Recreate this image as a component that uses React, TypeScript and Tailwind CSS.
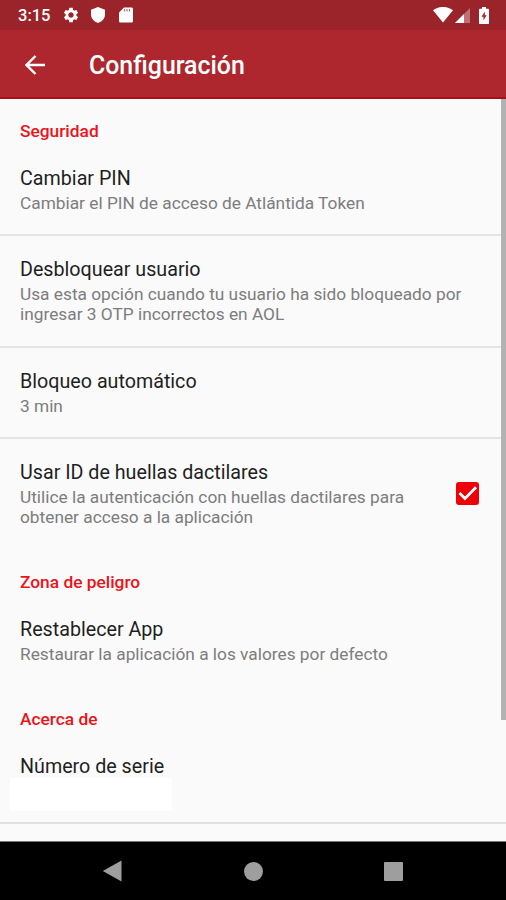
import React, { useState } from 'react';
import { clsx } from 'clsx';

interface SettingItem {
  title: string;
  summary?: string[];
  checkbox?: boolean;
  masked?: boolean;
}

interface SettingSection {
  label: string;
  items: SettingItem[];
}

const sections: SettingSection[] = [
  {
    label: 'Seguridad',
    items: [
      { title: 'Cambiar PIN', summary: ['Cambiar el PIN de acceso de Atlántida Token'] },
      {
        title: 'Desbloquear usuario',
        summary: ['Usa esta opción cuando tu usuario ha sido bloqueado por', 'ingresar 3 OTP incorrectos en AOL']
      },
      { title: 'Bloqueo automático', summary: ['3 min'] },
      {
        title: 'Usar ID de huellas dactilares',
        summary: ['Utilice la autenticación con huellas dactilares para', 'obtener acceso a la aplicación'],
        checkbox: true
      }
    ]
  },
  {
    label: 'Zona de peligro',
    items: [{ title: 'Restablecer App', summary: ['Restaurar la aplicación a los valores por defecto'] }]
  },
  {
    label: 'Acerca de',
    items: [{ title: 'Número de serie', masked: true }]
  }
];

function StatusBar() {
  return (
    <div className="flex h-[30px] shrink-0 items-center bg-[#9b242a] pl-[18px] pr-[17px] text-white">
      <span className="w-[44px] pt-px text-[16.5px] font-medium leading-5">3:15</span>
      {/* Settings */}
      <svg viewBox="0 0 24 24" className="h-[18px] w-[18px]" fill="currentColor">
        <path d="M19.14 12.94c.04-.3.06-.61.06-.94 0-.32-.02-.64-.07-.94l2.03-1.58c.18-.14.23-.41.12-.61l-1.92-3.32c-.12-.22-.37-.29-.59-.22l-2.39.96c-.5-.38-1.03-.7-1.62-.94l-.36-2.54c-.04-.24-.24-.41-.48-.41h-3.84c-.24 0-.43.17-.47.41l-.36 2.54c-.59.24-1.13.57-1.62.94l-2.39-.96c-.22-.08-.47 0-.59.22L2.74 8.87c-.12.21-.08.47.12.61l2.03 1.58c-.05.3-.09.63-.09.94s.02.64.07.94l-2.03 1.58c-.18.14-.23.41-.12.61l1.92 3.32c.12.22.37.29.59.22l2.39-.96c.5.38 1.03.7 1.62.94l.36 2.54c.05.24.24.41.48.41h3.84c.24 0 .44-.17.47-.41l.36-2.54c.59-.24 1.13-.56 1.62-.94l2.39.96c.22.08.47 0 .59-.22l1.92-3.32c.12-.22.07-.47-.12-.61l-2.01-1.58zM12 15.6c-1.98 0-3.6-1.62-3.6-3.6s1.62-3.6 3.6-3.6 3.6 1.62 3.6 3.6-1.62 3.6-3.6 3.6z" />
      </svg>
      {/* Shield */}
      <svg viewBox="0 0 14 16" className="ml-[11px] h-4 w-[14px]" fill="currentColor">
        <path d="M7 0 14 2.7V7.6C14 11.5 11 14.8 7 16 3 14.8 0 11.5 0 7.6V2.7Z" />
      </svg>
      {/* SD card */}
      <svg viewBox="0 0 14 16" className="ml-[14px] h-4 w-[14px]">
        <path d="M5 .5h7.4c.9 0 1.6.7 1.6 1.6v11.8c0 .9-.7 1.6-1.6 1.6H1.6C.7 15.5 0 14.8 0 13.9V5.5Z" fill="currentColor" />
        <path d="M5.5 2v2.5M8 2v2.5M10.5 2v2.5" stroke="#9b242a" strokeWidth="1.2" opacity=".65" />
      </svg>
      <div className="ml-auto flex items-center">
        <svg viewBox="0 0 20 16" className="h-4 w-5" fill="currentColor">
          <path d="M0 3.2C5.7-1.1 14.3-1.1 20 3.2L10 15.5Z" />
        </svg>
        <svg viewBox="0 0 15 15" className="ml-[2px] h-[15px] w-[15px]" fill="currentColor">
          <path d="M0 15 15 0v15Z" opacity=".35" />
          <path d="M0 15 9 6v9Z" />
        </svg>
        <svg viewBox="0 0 10 17" className="ml-[9px] h-[17px] w-[10px]">
          <path d="M3 0h4v1.7h2c.6 0 1 .4 1 1V16c0 .6-.4 1-1 1H1c-.6 0-1-.4-1-1V2.7c0-.6.4-1 1-1h2Z" fill="white" />
          <path d="M5.8 4.5 2.5 9.7h2v3.8l3.1-5.2H5.8Z" fill="#9b242a" />
        </svg>
      </div>
    </div>
  );
}

function AppBar() {
  return (
    <header className="flex h-[69px] shrink-0 items-center border-b-2 border-[#a80f16] bg-[#ae272f] pl-[25px] pt-[3px] text-white">
      <svg viewBox="0 0 20 20" className="h-5 w-5" fill="none" stroke="currentColor" strokeWidth="2.4">
        <path d="M20 10H2M10.5 1 1.5 10l9 9" />
      </svg>
      <h1 className="ml-11 pt-[2px] text-[24.9px] font-medium leading-8">Configuración</h1>
    </header>
  );
}

interface SettingRowProps {
  item: SettingItem;
  divider: boolean;
  checked: boolean;
  onToggle: () => void;
}

function SettingRow({ item, divider, checked, onToggle }: SettingRowProps) {
  return (
    <div
      className={clsx(
        'flex items-start justify-between border-t-2 pl-5 pr-[27px] pt-[22px] pb-[21px]',
        divider ? 'border-[#e4e4e4]' : 'border-transparent'
      )}
    >
      <div>
        <div className="text-[19.7px] leading-[23px] text-[#1f1f1f]">{item.title}</div>
        {item.summary && (
          <div className="mt-[3px] text-[17.3px] leading-[20.3px] text-[#7d7d7d]">
            {item.summary.map((line) => (
              <div key={line} className="whitespace-nowrap">{line}</div>
            ))}
          </div>
        )}
        {item.masked && <div className="-ml-[10px] -mb-[10px] h-[33px] w-[162px] bg-white" />}
      </div>
      {item.checkbox && (
        <button
          role="checkbox"
          aria-checked={checked}
          aria-label={item.title}
          onClick={onToggle}
          className="mt-[21px] flex h-[23px] w-[23px] items-center justify-center rounded-[3px] bg-[#ee0009]"
        >
          {checked && (
            <svg viewBox="0 0 23 23" className="h-[23px] w-[23px]" fill="none" stroke="white" strokeWidth="2.7">
              <path d="M3.5 11 9 16.5 20 5.3" />
            </svg>
          )}
        </button>
      )}
    </div>
  );
}

function NavigationBar() {
  return (
    <nav className="flex h-[59px] shrink-0 items-center justify-between border-t border-[#777] bg-black pl-[102px] pr-[103px] text-[#9e9e9e]">
      <svg viewBox="0 0 20 22" className="h-[22px] w-5" fill="currentColor">
        <path d="M19.5.5v21L.8 11Z" />
      </svg>
      <div className="h-[19px] w-[19px] rounded-full bg-[#9e9e9e]" />
      <div className="h-[19px] w-[19px] rounded-[1px] bg-[#9e9e9e]" />
    </nav>
  );
}

export default function App() {
  const [fingerprint, setFingerprint] = useState(true);

  return (
    <div className="flex h-[900px] w-[506px] flex-col overflow-hidden bg-[#fafafa] font-['Roboto',sans-serif]">
      <StatusBar />
      <AppBar />
      <main className="relative min-h-0 flex-1 overflow-hidden">
        {sections.map((section, sectionIndex) => (
          <section key={section.label} className={clsx(sectionIndex > 0 && 'pt-[1.6px]')}>
            <h2 className="px-5 pt-[21.8px] pb-[2px] text-[17.33px] font-medium leading-5 text-[#ee1119]">{section.label}</h2>
            {section.items.map((item, index) => (
              <SettingRow
                key={item.title}
                item={item}
                divider={index > 0}
                checked={fingerprint}
                onToggle={() => setFingerprint(!fingerprint)}
              />
            ))}
          </section>
        ))}
        <div className="border-t-2 border-[#e0e0e0]" />
        {/* Scroll indicator */}
        <div className="absolute right-0 top-0 h-[621px] w-[5px] bg-[#b2b2b2]" />
      </main>
      <NavigationBar />
    </div>
  );
}
